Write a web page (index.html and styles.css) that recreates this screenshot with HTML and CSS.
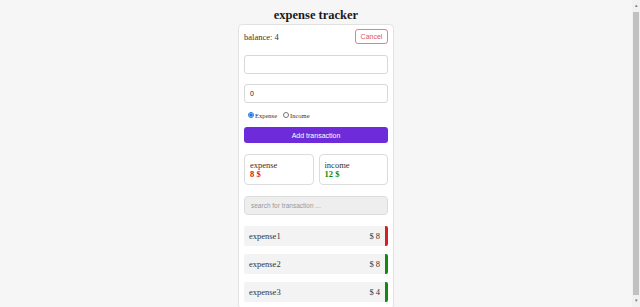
FILE: index.html
```html
<!DOCTYPE html>
<html>
<head>
<meta charset="utf-8">
<link rel="stylesheet" href="styles.css">
</head>
<body>
<h1 class="title">expense tracker</h1>
<div class="card">
  <div class="balance-row">
    <span class="balance">balance: 4</span>
    <button class="cancel">Cancel</button>
  </div>
  <form class="form">
    <input class="field" type="text" value="">
    <input class="field" type="text" value="0">
    <div class="radios">
      <label class="radio"><input type="radio" name="t" checked>Expense</label>
      <label class="radio"><input type="radio" name="t">Income</label>
    </div>
    <button type="button" class="add">Add transaction</button>
  </form>
  <div class="summary">
    <div class="sum-box">
      <div class="sum-label">expense</div>
      <div class="sum-val red">8 $</div>
    </div>
    <div class="sum-box">
      <div class="sum-label">income</div>
      <div class="sum-val green">12 $</div>
    </div>
  </div>
  <input class="search" type="text" placeholder="search for transaction ...">
  <ul class="list">
    <li class="item item-red"><span>expense1</span><span>$ 8</span></li>
    <li class="item item-green"><span>expense2</span><span>$ 8</span></li>
    <li class="item item-green"><span>expense3</span><span>$ 4</span></li>
  </ul>
</div>
<div class="scrollbar">
  <span class="arrow">&#9652;</span>
  <div class="thumb"></div>
  <span class="arrow">&#9662;</span>
</div>
</body>
</html>
```
FILE: styles.css
```css
html {
  background: #f6f6f6;
}
body {
  margin: 0;
  padding: 7px 8px 4px 0;
  font-family: "Liberation Serif", "Times New Roman", serif;
  font-size: 8.5px;
  color: #333;
  display: flex;
  flex-direction: column;
  align-items: center;
}
.title {
  margin: 0;
  font-size: 12.5px;
  line-height: 17px;
  font-weight: bold;
  color: #1a1a1a;
}
.card {
  box-sizing: border-box;
  width: 156px;
  background: #fff;
  border: 1px solid #e2e2e2;
  border-radius: 4px;
  padding: 4px 5px 6px;
}
.balance-row {
  display: flex;
  justify-content: space-between;
  align-items: center;
  height: 15px;
}
.balance {
  color: #333;
}
.cancel {
  box-sizing: border-box;
  height: 15px;
  width: 33px;
  padding: 0;
  background: #fff;
  color: #e05555;
  border: 1px solid #e58080;
  border-radius: 3px;
  font-family: "Liberation Sans", Arial, sans-serif;
  font-size: 7px;
}
.form {
  margin: 11px 0 0;
  display: flex;
  flex-direction: column;
}
.field {
  box-sizing: border-box;
  height: 19px;
  margin: 0 0 10px;
  padding: 0 5px;
  border: 1px solid #d8d8d8;
  border-radius: 3px;
  background: #fff;
  font-family: "Liberation Sans", Arial, sans-serif;
  font-size: 7px;
  color: #222;
  outline: none;
}
.radios {
  display: flex;
  align-items: center;
  gap: 6px;
  margin: -4px 0 0 4px;
  height: 12px;
}
.radio {
  display: flex;
  align-items: center;
  font-size: 6.5px;
  color: #333;
}
.radio input {
  width: 6px;
  height: 6px;
  margin: 0 1px 0 0;
  accent-color: #1a73e8;
}
.add {
  margin-top: 6px;
  height: 16px;
  padding: 0;
  border: none;
  border-radius: 3px;
  background: #6d2bd9;
  color: #fff;
  font-family: "Liberation Sans", Arial, sans-serif;
  font-size: 7px;
}
.summary {
  display: grid;
  grid-template-columns: 1fr 1fr;
  gap: 5px;
  margin-top: 11px;
}
.sum-box {
  box-sizing: border-box;
  height: 31px;
  border: 1px solid #dcdcdc;
  border-radius: 4px;
  padding: 6px 5px 0;
}
.sum-label {
  font-size: 8.5px;
  line-height: 9px;
  color: #333;
}
.sum-val {
  font-weight: bold;
  font-size: 8.5px;
  line-height: 9px;
}
.red { color: #e01010; }
.green { color: #0a8a0a; }
.search {
  box-sizing: border-box;
  width: 100%;
  height: 19px;
  margin-top: 11px;
  padding: 0 6px;
  border: 1px solid #dcdcdc;
  border-radius: 4px;
  background: #eeeeee;
  font-family: "Liberation Sans", Arial, sans-serif;
  font-size: 6.5px;
  outline: none;
}
.search::placeholder {
  color: #999;
}
.list {
  list-style: none;
  margin: 11px 0 0;
  padding: 0;
  display: flex;
  flex-direction: column;
  gap: 8px;
}
.item {
  box-sizing: border-box;
  height: 20px;
  display: flex;
  justify-content: space-between;
  align-items: center;
  padding: 0 5px;
  background: #f3f3f3;
  border-right: 3px solid;
  border-radius: 2px;
  font-size: 8.5px;
  color: #333;
}
.item-red { border-right-color: #d42020; }
.item-green { border-right-color: #108a10; }
.scrollbar {
  position: fixed;
  top: 0;
  right: 0;
  width: 8px;
  height: 100%;
  background: #f1f1f1;
  display: flex;
  flex-direction: column;
  align-items: center;
}
.arrow {
  font-size: 5px;
  line-height: 12px;
  height: 12px;
  color: #777;
}
.thumb {
  flex: 1;
  width: 6px;
  background: #c1c1c1;
}
```
